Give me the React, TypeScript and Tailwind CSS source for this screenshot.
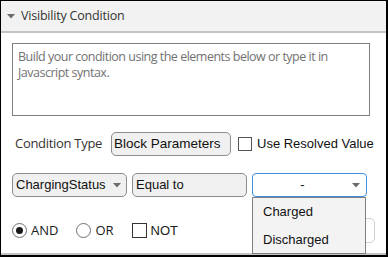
import React from "react"

const segoe = { fontFamily: '"Open Sans", "Noto Sans", sans-serif' }

function Caret({ className = "" }: { className?: string }) {
  return (
    <svg width="8" height="5" viewBox="0 0 8 5" className={className}>
      <path d="M0 0 L8 0 L4 4.5 Z" fill="#6b6b6b" />
    </svg>
  )
}

function Radio({ checked, label }: { checked?: boolean; label: string }) {
  return (
    <div className="flex items-center gap-[4px]">
      <div className="w-[15px] h-[15px] rounded-full border border-[#6f6f6f] bg-white flex items-center justify-center">
        {checked && <div className="w-[7px] h-[7px] rounded-full bg-[#1a1a1a]" />}
      </div>
      <span className="text-[13px] text-[#1a1a1a] leading-none whitespace-nowrap" style={segoe}>
        {label}
      </span>
    </div>
  )
}

export default function App() {
  return (
    <div className="w-[388px] h-[257px] bg-white border-t border-l border-r-2 border-b-2 border-black flex flex-col overflow-hidden">
      {/* header */}
      <div className="h-[32px] shrink-0 bg-[#f2f2f2] border-b-2 border-[#c4c4c4] flex items-center pl-[6px] gap-[6px]">
        <Caret />
        <span className="text-[12.5px] tracking-[-0.2px] text-[#333] leading-none whitespace-nowrap" style={segoe}>
          Visibility Condition
        </span>
      </div>

      <div className="relative flex-1 flex flex-col px-[11px] pt-[10px]">
        {/* expression box */}
        <div className="w-[358px] h-[73px] border border-[#7f7f7f] px-[5px] pt-[5px]">
          <p className="text-[12.5px] tracking-[-0.5px] leading-[16px] text-[#727272]" style={segoe}>
            Build your condition using the elements below or type it in Javascript syntax.
          </p>
        </div>

        {/* condition type */}
        <div className="mt-[16px] flex items-center h-[24px] whitespace-nowrap">
          <span className="ml-[3px] w-[87px] text-[13px] tracking-[-0.3px] text-[#333]" style={segoe}>
            Condition Type
          </span>
          <div className="ml-[9px] w-[120px] h-[24px] rounded-[5px] border border-[#8c8c8c] bg-[#f0f0f0] flex items-center pl-[2px]">
            <span className="text-[13.5px] text-[#111] font-['Liberation_Sans',Arial,sans-serif]">Block Parameters</span>
          </div>
          <div className="ml-[7px] w-[14px] h-[14px] border border-[#555] bg-white" />
          <span className="ml-[5px] text-[13px] text-[#111] font-['Liberation_Sans',Arial,sans-serif]">
            Use Resolved Value
          </span>
        </div>

        {/* operand row */}
        <div className="mt-[17px] flex items-center h-[24px] gap-[5px] whitespace-nowrap font-['Liberation_Sans',Arial,sans-serif]">
          <div className="w-[115px] h-[24px] rounded-[5px] border border-[#8c8c8c] bg-[#f0f0f0] flex items-center justify-between pl-[3px] pr-[5px]">
            <span className="text-[13px] text-[#111]">ChargingStatus</span>
            <Caret />
          </div>
          <div className="w-[115px] h-[24px] rounded-[5px] border border-[#8c8c8c] bg-[#f0f0f0] flex items-center pl-[3px]">
            <span className="text-[13px] text-[#111]">Equal to</span>
          </div>
          <div className="w-[115px] h-[24px] rounded-[4px] border border-[#3d8fe0] bg-white flex items-center pr-[6px]">
            <span className="flex-1 text-center text-[13px] text-[#111]">-</span>
            <Caret />
          </div>
        </div>

        {/* logic row */}
        <div className="mt-[21px] flex items-center h-[25px]">
          <Radio checked label="AND" />
          <div className="ml-[18px]">
            <Radio label="OR" />
          </div>
          <div className="ml-[18px] flex items-center gap-[4px]">
            <div className="w-[15px] h-[15px] border border-[#333] bg-white" />
            <span className="text-[13px] text-[#1a1a1a] font-['Liberation_Sans',Arial,sans-serif] leading-none">NOT</span>
          </div>
          <div className="ml-auto w-[80px] h-[25px] rounded-[5px] border border-[#d0d0d0] bg-white" />
        </div>

        <div className="mt-auto h-[2px] bg-[#c4c4c4] -mx-[11px]" />

        {/* open dropdown list */}
        <div className="absolute left-[251px] top-[164px] w-[114px] h-[57px] bg-[#f3f3f3] border border-[#808080] flex flex-col pl-[10px] font-['Liberation_Sans',Arial,sans-serif]">
          <span className="mt-[5px] text-[13px] text-[#111] leading-[18px]">Charged</span>
          <span className="mt-[10px] text-[13px] text-[#111] leading-[18px]">Discharged</span>
        </div>
      </div>
    </div>
  )
}
